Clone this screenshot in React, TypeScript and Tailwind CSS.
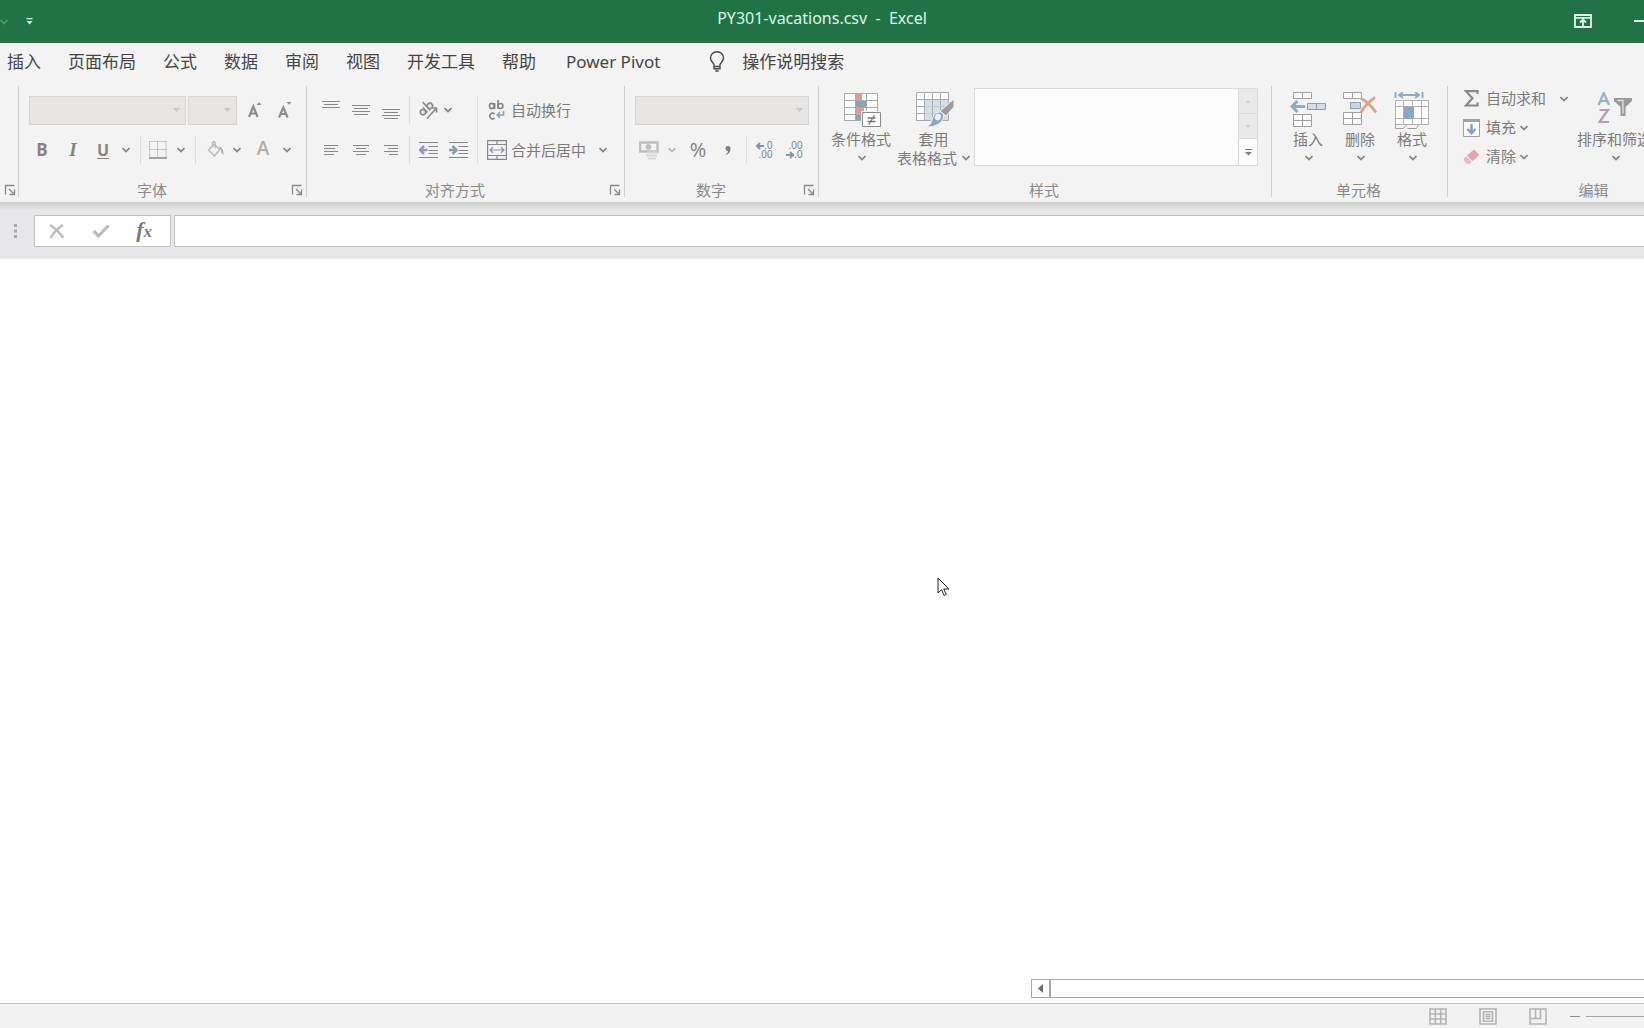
import type { ReactNode } from "react";

const G = "#8f8d8b";

function Chevron({ className = "text-[#858381]" }: { className?: string }) {
  return (
    <svg className={`shrink-0 ${className}`} width="8" height="6" viewBox="0 0 8 6" fill="none" stroke="currentColor" strokeWidth="1.700" aria-hidden="true">
      <path d="M0.500 1L4 4.500 7.500 1" />
    </svg>
  );
}

function Tool({ label, width, children }: { label: string; width: string; children: ReactNode }) {
  return (
    <button type="button" aria-label={label} className={`flex h-7 shrink-0 items-center justify-center ${width}`}>
      {children}
    </button>
  );
}

function Sep({ className = "" }: { className?: string }) {
  return <span className={`w-px shrink-0 self-stretch bg-[#dcdcdc] ${className}`} />;
}

function Launcher({ label }: { label: string }) {
  return (
    <button type="button" aria-label={label} className="mr-[3px] ml-1 flex size-3 shrink-0 items-center justify-center">
      <svg width="12" height="12" viewBox="0 0 12 12" fill="none" stroke="#8a8886" strokeWidth="1.3" aria-hidden="true">
        <path d="M1.5 10.5v-9h9M5 5l5 5M10.5 5.5v5h-5" />
      </svg>
    </button>
  );
}

function Group({ name, launcher = false, className, children }: { name: string; launcher?: boolean; className: string; children: ReactNode }) {
  return (
    <section aria-label={name} className={`flex shrink-0 flex-col border-r border-[#cfcfcf] ${className}`}>
      <div className="flex-1">{children}</div>
      <div className="flex h-[14px] items-center">
        <span className="flex-1 pr-0.5 text-center text-[15px] leading-4 text-[#8c8a88]">{name}</span>
        {launcher && <Launcher label={`${name}设置`} />}
      </div>
    </section>
  );
}

function Combo({ label, width }: { label: string; width: string }) {
  return (
    <div className={`relative h-[29px] shrink-0 ${width}`}>
      <select aria-label={label} disabled className="size-full appearance-none border border-[#d6d5d3] bg-[#e7e6e4] opacity-100" />
      <svg className="absolute top-3 right-1.5" width="7" height="4" viewBox="0 0 7 4" aria-hidden="true">
        <path d="M0 0h7L3.500 4z" fill="#cbc9c7" />
      </svg>
    </div>
  );
}

function Lines({ rows }: { rows: [number, number, number][] }) {
  return (
    <svg width="18" height="20" viewBox="0 0 18 20" stroke="#8b8785" strokeWidth="1" aria-hidden="true">
      {rows.map(([x1, x2, y]) => (
        <path key={y} d={`M${x1} ${y + 0.5}H${x2}`} />
      ))}
    </svg>
  );
}

function BigButton({ icon, lines, width }: { icon: ReactNode; lines: string[]; width: string }) {
  return (
    <button type="button" className={`flex shrink-0 flex-col items-center text-[15px] leading-5 whitespace-nowrap text-[#7d7b79] ${width}`}>
      <span className="flex h-[37px] items-start justify-center">{icon}</span>
      <span>{lines[0]}</span>
      <span className="flex h-[18px] items-center gap-[5px]">
        {lines[1]}
        <Chevron className={lines[1] ? "text-[#858381]" : "ml-0.5 text-[#858381]"} />
      </span>
    </button>
  );
}

function EditItem({ icon, text, gap }: { icon: ReactNode; text: string; gap: string }) {
  return (
    <button type="button" className="flex h-[29px] items-center text-[15px] whitespace-nowrap text-[#7d7b79]">
      <span className="mr-1.5 flex w-[18px] justify-center">{icon}</span>
      {text}
      <span className={gap}>
        <Chevron />
      </span>
    </button>
  );
}

const LATIN = "font-['Open_Sans','Noto_Sans',sans-serif]";

const tabs = ["插入", "页面布局", "公式", "数据", "审阅", "视图", "开发工具", "帮助"];

function TitleBar() {
  return (
    <header className="grid h-[43px] grid-cols-[1fr_auto_1fr] border-b border-[#3a6b50] bg-[#217346] text-[#dcf7e6]">
      <div className="flex items-center pt-px">
        <button type="button" aria-label="撤消">
          <Chevron className="text-[#4f9a70]" />
        </button>
        <button type="button" aria-label="自定义快速访问工具栏" className="ml-[18px]">
          <svg width="7" height="7" viewBox="0 0 7 7" fill="currentColor" aria-hidden="true">
            <path d="M0.500 0h6v1.200h-6zM0.500 3h6l-3 3.500z" />
          </svg>
        </button>
      </div>
      <h1 className="pt-2 text-[16px] leading-5 whitespace-pre">PY301-vacations.csv  -  Excel</h1>
      <div className="flex items-center justify-end overflow-hidden">
        <button type="button" aria-label="功能区显示选项" className="mr-[42px]">
          <svg width="18" height="14" viewBox="0 0 18 14" fill="none" stroke="currentColor" strokeWidth="1.800" aria-hidden="true">
            <path d="M1 1h16v12H1zM1 3.800h16M9 12V6M6 8.500l3-3 3 3" />
          </svg>
        </button>
        <button type="button" aria-label="最小化" className="h-4 w-2.5">
          <span className="block h-0.5 bg-current" />
        </button>
      </div>
    </header>
  );
}

function TabBar() {
  return (
    <nav className="flex h-[43px] items-center gap-[27px] pr-4 pb-1.5 pl-[7px] text-[17px] whitespace-nowrap text-[#474543]">
      {tabs.map((t) => (
        <button type="button" key={t}>
          {t}
        </button>
      ))}
      <button type="button" className="ml-[3px]">
        Power Pivot
      </button>
      <button type="button" className="ml-[22px] flex items-center gap-[17px]">
        <svg width="16" height="21" viewBox="0 0 16 21" fill="none" stroke="#4a4846" strokeWidth="1.400" aria-hidden="true">
          <path d="M5 15.500v-2C4.800 12 1.500 10.500 1.500 7a6.500 6.200 0 0 1 13 0c0 3.500-3.300 5-3.500 6.500v2zM5 15.500v2.200h6v-2.200M6.300 20h3.400" />
        </svg>
        操作说明搜索
      </button>
    </nav>
  );
}

function FontGroup() {
  return (
    <Group name="字体" launcher className="w-[288px]">
      <div className="flex gap-0.5 pt-[10px] pl-[10px]">
        <Combo label="字体名称" width="w-[157px]" />
        <Combo label="字号" width="w-[49px]" />
        <Tool label="增大字号" width="w-8">
          <svg width="14" height="17" viewBox="0 0 14 17" aria-hidden="true">
            <path d="M8.500 3L11 0.300 13.500 3z" fill={G} />
            <path d="M1 15L5.300 4.500 9.600 15M2.800 11.500h5" fill="none" stroke={G} strokeWidth="2.200" />
          </svg>
        </Tool>
        <Tool label="减小字号" width="w-6">
          <svg width="14" height="17" viewBox="0 0 14 17" aria-hidden="true">
            <path d="M8.500 0L11 2.700 13.500 0z" fill={G} />
            <path d="M1 15.500L5.300 5.500 9.600 15.500M2.800 12h5" fill="none" stroke={G} strokeWidth="2.200" />
          </svg>
        </Tool>
      </div>
      <div className="flex pt-[11px] pl-2 text-[#858381]">
        <Tool label="加粗" width="w-[30px]">
          <span className={`text-[17px] font-bold ${LATIN}`}>B</span>
        </Tool>
        <Tool label="倾斜" width="w-8">
          <span className="font-['Liberation_Serif',serif] text-[19px] font-bold italic">I</span>
        </Tool>
        <Tool label="下划线" width="w-7">
          <span className={`border-b border-current text-[16px] leading-4 font-bold ${LATIN}`}>U</span>
        </Tool>
        <Tool label="下划线选项" width="w-[18px]">
          <Chevron />
        </Tool>
        <Sep className="mr-[5px] ml-[5px]" />
        <Tool label="边框" width="w-6">
          <svg width="18" height="18" viewBox="0 0 18 18" fill="none" stroke="#9d9b99" aria-hidden="true">
            <path d="M0.500 0.500h17M0.500 8.500h17M0.500 0.500v16M8.500 0.500v16M17 0.500v16" strokeDasharray="1 1" />
            <path d="M0 17h18" strokeWidth="1.500" stroke="#8b8987" />
          </svg>
        </Tool>
        <Tool label="边框选项" width="w-[21px]">
          <Chevron />
        </Tool>
        <Sep className="mx-1" />
        <Tool label="填充颜色" width="w-[31px]">
          <svg width="18" height="18" viewBox="0 0 18 18" fill="none" stroke="#bdbab7" strokeWidth="1.500" aria-hidden="true">
            <path d="M7 3.500l6 4.800L7.500 15 1.500 9zM5.500 6V2a1.300 1.300 0 0 1 2.600 0V7" />
            <path d="M12 5.500c3 0.500 4.800 3 4.500 8.500-1.500-1-2.800-3-2.500-5z" fill="#b3b0ad" stroke="none" />
          </svg>
        </Tool>
        <Tool label="填充颜色选项" width="w-3">
          <Chevron />
        </Tool>
        <Tool label="字体颜色" width="w-10">
          <span className={`-mt-1 text-[19px] font-semibold text-[#b0adab] ${LATIN}`}>A</span>
        </Tool>
        <Tool label="字体颜色选项" width="w-2">
          <Chevron />
        </Tool>
      </div>
    </Group>
  );
}

function Indent({ flip = false }: { flip?: boolean }) {
  return (
    <svg width="19" height="18" viewBox="0 0 19 18" fill="none" aria-hidden="true">
      <path d="M0 1.500h19M9.500 5.500H19M9.500 9.500H19M9.500 12.500H19M0 16.500h19" stroke="#8b8785" />
      <path d={flip ? "M0 9h7M3.500 5L7.500 9l-4 4" : "M8.500 9H1.500M5 5L1 9l4 4"} stroke="#8a9db8" strokeWidth="2.500" />
    </svg>
  );
}

function AlignGroup() {
  return (
    <Group name="对齐方式" launcher className="w-[318px]">
      <div className="flex pt-[10px] pl-[9px]">
        <div className="flex flex-col gap-3">
          <div className="flex">
            <Tool label="顶端对齐" width="w-[30px]"><Lines rows={[[0, 18, 1], [2, 16, 4], [0, 18, 7]]} /></Tool>
            <Tool label="垂直居中" width="w-[30px]"><Lines rows={[[0, 18, 5], [2, 16, 8], [0, 18, 11], [2, 16, 14]]} /></Tool>
            <Tool label="底端对齐" width="w-[30px]"><Lines rows={[[0, 18, 9], [2, 16, 12], [0, 18, 15], [2, 16, 18]]} /></Tool>
          </div>
          <div className="flex">
            <Tool label="左对齐" width="w-[30px]"><Lines rows={[[2, 16, 5], [2, 13, 8], [2, 16, 11], [2, 12, 14]]} /></Tool>
            <Tool label="居中" width="w-[30px]"><Lines rows={[[1, 17, 5], [4, 14, 8], [1, 17, 11], [4, 14, 14]]} /></Tool>
            <Tool label="右对齐" width="w-[30px]"><Lines rows={[[2, 16, 5], [6, 16, 8], [2, 16, 11], [7, 16, 14]]} /></Tool>
          </div>
        </div>
        <div className="mx-[3px] flex flex-col gap-3">
          <Sep className="w-px flex-1 self-center" />
          <Sep className="w-px flex-1 self-center" />
        </div>
        <div className="flex w-16 flex-col gap-3">
          <div className="flex">
            <Tool label="方向" width="w-[30px]">
              <svg width="20" height="20" viewBox="0 0 20 20" fill="none" stroke={G} strokeWidth="1.700" aria-hidden="true">
                <g transform="rotate(-42 8 8)">
                  <circle cx="3" cy="9" r="2.700" />
                  <path d="M6 5.500v7M9.500 1.500v11" />
                  <circle cx="12.300" cy="9" r="2.700" />
                </g>
                <path d="M9 18.500l9-10M14 8h4.500v4.500" />
              </svg>
            </Tool>
            <Tool label="方向选项" width="w-[9px]">
              <Chevron />
            </Tool>
          </div>
          <div className="flex">
            <Tool label="减少缩进量" width="w-[30px]"><Indent /></Tool>
            <Tool label="增加缩进量" width="w-[30px]"><Indent flip /></Tool>
          </div>
        </div>
        <Sep />
        <div className="flex flex-col gap-3 pl-[9px] text-[15px] whitespace-nowrap text-[#7d7b79]">
          <button type="button" className="flex h-7 items-center gap-1">
            <svg width="20" height="20" viewBox="0 0 20 20" fill="none" stroke="#858381" strokeWidth="1.600" aria-hidden="true">
              <ellipse cx="4.800" cy="6" rx="2.300" ry="2.600" />
              <path d="M7.600 3v6M11 0v9M7.600 14a2.800 2.800 0 1 0 0 4" />
              <circle cx="13.400" cy="6" r="2.500" />
              <path d="M16.500 11v4H10.500M13 12.200L10.200 15l2.800 2.800" stroke="#8a9db8" />
            </svg>
            自动换行
          </button>
          <button type="button" className="flex h-7 items-center gap-1">
            <svg width="20" height="20" viewBox="0 0 20 20" fill="none" stroke="#8b8987" strokeWidth="1.200" aria-hidden="true">
              <path d="M0.600 0.600h18.800v18.800H0.600zM0.600 4.500h18.800M0.600 15.500h18.800M10 0.600v4M10 15.500v4" />
              <path d="M3 10h14M6 7.200L3 10l3 2.800M14 7.200l3 2.800-3 2.800" stroke="#8598b0" />
            </svg>
            合并后居中
            <span className="ml-[9px]"><Chevron /></span>
          </button>
        </div>
      </div>
    </Group>
  );
}

function Decimals({ less = false }: { less?: boolean }) {
  const arrow = (
    <svg width="8" height="8" viewBox="0 0 8 8" fill="none" stroke="#7f95ab" strokeWidth="2" aria-hidden="true">
      <path d={less ? "M0 4h7M4 1l3 3-3 3" : "M8 4H1M4 1L1 4l3 3"} />
    </svg>
  );
  return (
    <span className="flex w-[17px] flex-col items-end font-['Liberation_Sans',sans-serif] text-[10px] leading-[9px] text-[#82807e]">
      <span className="flex items-center">{!less && arrow}{less ? ".00" : ".0"}</span>
      <span className="flex items-center">{less && arrow}{less ? ".0" : ".00"}</span>
    </span>
  );
}

function NumberGroup() {
  return (
    <Group name="数字" launcher className="w-[194px]">
      <div className="pt-[10px] pl-[10px]">
        <Combo label="数字格式" width="w-[174px]" />
      </div>
      <div className="flex pt-[11px] pl-[9px] text-[#82807e]">
        <Tool label="会计数字格式" width="w-[30px]">
          <svg width="20" height="19" viewBox="0 0 20 19" fill="none" stroke="#c0bebc" aria-hidden="true">
            <path d="M1 1.500h17.500v9H1z" strokeWidth="2.400" />
            <circle cx="9.500" cy="6" r="2.500" fill="#c0bebc" />
            <path d="M8 11.500h12M7 14.500h11M9 17.500h8" strokeWidth="2" stroke="#d9d7d5" />
          </svg>
        </Tool>
        <Tool label="会计格式选项" width="w-4">
          <Chevron className="text-[#bdbbb9]" />
        </Tool>
        <Tool label="百分比样式" width="w-9">
          <span className={`text-[20px] ${LATIN}`}>%</span>
        </Tool>
        <Tool label="千位分隔样式" width="w-[23px]">
          <svg width="6" height="9" viewBox="0 0 6 9" fill="#857d7b" aria-hidden="true">
            <path d="M3 0a2.500 2.500 0 0 1 2.500 2.700C5.500 6 3.800 8 1 8.800L0.700 8C2.300 7.300 3 6.300 3 5A2.500 2.500 0 0 1 3 0z" />
          </svg>
        </Tool>
        <Sep className="mr-0.5 ml-[7px]" />
        <Tool label="增加小数位数" width="w-[30px]"><Decimals /></Tool>
        <Tool label="减少小数位数" width="w-[30px]"><Decimals less /></Tool>
      </div>
    </Group>
  );
}

function StylesGroup() {
  return (
    <Group name="样式" className="w-[453px]">
      <div className="flex pt-0.5">
        <div className="flex pt-1 pl-1.5">
          <BigButton
            width="w-[72px]"
            lines={["条件格式", ""]}
            icon={
              <svg className="ml-1" width="38" height="36" viewBox="0 -1 38 36" fill="none" aria-hidden="true">
                <path d="M1 1h33v27H1z" fill="#fdfdfd" />
                <path d="M12 1h6v6h-6zM12 15h8v6h-8z" fill="#d9a093" />
                <path d="M12 8h10v6H12zM12 22h6v6h-6z" fill="#8aa3bd" />
                <path d="M0.500 0.500h33v27h-33zM11.500 1v27M22.500 1v27M1 7.500h33M1 14.500h33M1 21.500h33" stroke="#a9aaab" />
                <path d="M17 18h21v16H17z" fill="#f3f3f3" />
                <path d="M18.500 19.500h18v14h-18z" fill="#fff" stroke="#8b8987" />
                <path d="M23.500 25h8M23.500 28.500h8M30.500 22l-5.500 9.500" stroke="#777573" strokeWidth="1.300" />
              </svg>
            }
          />
          <BigButton
            width="w-[73px]"
            lines={["套用", "表格格式"]}
            icon={
              <svg className="ml-0.5" width="38" height="36" viewBox="0 0 38 36" fill="none" aria-hidden="true">
                <path d="M1 1h32v27H1z" fill="#fdfdfd" />
                <path d="M9 8h24v20H9z" fill="#d3dfea" />
                <path d="M0.500 0.500h32v28h-32zM8.500 1v27M16.500 1v27M24.500 1v27M1 7.500h32" stroke="#a9aaab" />
                <path d="M1 14.500h8M1 21.500h8" stroke="#a9aaab" />
                <path d="M9 14.500h24M9 21.500h24" stroke="#bccad6" />
                <path d="M38 7v8L30 24l-6-5z" fill="#a09c9a" stroke="#f3f3f3" />
                <path d="M23 20c3 0 5 2 4.500 5-1 6-8 10.500-17.500 10 4-1.500 5-3.500 6-7 1-4 4-8 7-8z" fill="#8aa7c6" stroke="#f3f3f3" />
                <ellipse cx="22" cy="25" rx="2.800" ry="3.500" transform="rotate(30 22 25)" fill="#f3f6fa" />
              </svg>
            }
          />
        </div>
        <div className="ml-1 flex h-[78px] w-[284px] border border-[#dadada] bg-[#fcfcfc]">
          <div className="flex-1" />
          <div className="flex w-[19px] flex-col border-l border-[#dadada]">
            <button type="button" aria-label="上一行" disabled className="flex flex-1 items-center justify-center border-b border-[#dadada] bg-[#ebe9e8]">
              <svg width="6" height="3" viewBox="0 0 6 3" fill="#d3d1cf" aria-hidden="true"><path d="M0 3L3 0l3 3z" /></svg>
            </button>
            <button type="button" aria-label="下一行" disabled className="flex flex-1 items-center justify-center border-b border-[#dadada] bg-[#ebe9e8]">
              <svg width="6" height="3" viewBox="0 0 6 3" fill="#d3d1cf" aria-hidden="true"><path d="M0 0l3 3 3-3z" /></svg>
            </button>
            <button type="button" aria-label="其他样式" className="flex h-[26px] items-center justify-center">
              <svg width="7" height="7" viewBox="0 0 7 7" fill="#82807e" aria-hidden="true"><path d="M0 0h7v1H0zM0 3h7L3.500 6.500z" /></svg>
            </button>
          </div>
        </div>
      </div>
    </Group>
  );
}

function CellsGroup() {
  return (
    <Group name="单元格" className="w-[176px]">
      <div className="flex pt-1.5 pl-[10px]">
        <BigButton
          width="w-[52px]"
          lines={["插入", ""]}
          icon={
            <svg width="36" height="36" viewBox="0 0.500 36 36" fill="none" aria-hidden="true">
              <path d="M3.500 1h18v6h-18zM12.500 1v6M3.500 23h18v12h-18zM12.500 23v12M3.500 29h18" fill="#fbfbfb" stroke="#a19f9e" />
              <path d="M17.500 12h18v6h-18zM26.500 12v6" fill="#d5dce8" stroke="#9599a2" />
              <path d="M15 15H2M7.500 9.500L2 15l5.500 5.500" stroke="#8fa9c6" strokeWidth="3" />
            </svg>
          }
        />
        <BigButton
          width="w-[52px]"
          lines={["删除", ""]}
          icon={
            <svg width="36" height="36" viewBox="0 0.500 36 36" fill="none" aria-hidden="true">
              <path d="M1.500 1h18v6h-18zM10.500 1v6M1.500 21h18v12h-18zM10.500 21v12M1.500 27h18" fill="#fbfbfb" stroke="#a19f9e" />
              <path d="M8.500 11h10v6h-10z" fill="#c9d5e6" stroke="#959eab" />
              <path d="M19 7c6 3 11 8 15 14M33 6c-6 4-11 9-14 15" stroke="#dda48c" strokeWidth="2.800" />
            </svg>
          }
        />
        <BigButton
          width="w-[52px]"
          lines={["格式", ""]}
          icon={
            <svg width="36" height="38" viewBox="0 0 36 38" fill="none" aria-hidden="true">
              <path d="M1.500 0v6M28.500 0v6M5 3h20M9 0L5 3l4 3M21 0l4 3-4 3" stroke="#8fa9c6" strokeWidth="1.800" />
              <path d="M1.500 8.500h33v24h-33z" fill="#fdfdfd" />
              <path d="M1.500 8.500h33v24h-33zM1.500 14.500h33M1.500 26.500h33M9.500 8.500v24M18.500 8.500v24M27.500 8.500v24" stroke="#aeb0b2" />
              <path d="M10 15h10v12H10z" fill="#8aa7c6" />
              <path d="M1.500 32.500v4h8l3-3.500M13.500 36.500h9l2-3.500" stroke="#a19f9e" />
            </svg>
          }
        />
      </div>
    </Group>
  );
}

function EditGroup() {
  return (
    <Group name="编辑" className="w-[294px]">
      <div className="flex">
        <div className="-mt-0.5 flex w-[129px] flex-col pl-[14px]">
          <EditItem
            text="自动求和"
            gap="ml-[14px]"
            icon={
              <svg width="15" height="17" viewBox="0 0 15 17" fill="none" stroke="#8b8987" strokeWidth="2.200" aria-hidden="true">
                <path d="M13.500 4V1.200H2L8.500 8.300 2 15.500h11.500V12.500" />
              </svg>
            }
          />
          <EditItem
            text="填充"
            gap="ml-1"
            icon={
              <svg width="17" height="18" viewBox="0 0 17 18" fill="none" aria-hidden="true">
                <path d="M0.500 0.500h16v17H0.500z" fill="#fbfbfb" stroke="#a3a09e" />
                <path d="M0 0h17v3H0z" fill="#a3a09e" />
                <path d="M8.500 5v9M4.500 10l4 4.300 4-4.300" stroke="#869dbd" strokeWidth="2.400" />
              </svg>
            }
          />
          <EditItem
            text="清除"
            gap="ml-1"
            icon={
              <svg width="17" height="16" viewBox="0 0 17 16" aria-hidden="true">
                <path d="M11 0.500l5.500 5.500-7 6L4 6.500z" fill="#e3a5b1" />
                <path d="M3.200 7.200l5.500 5.500-2.500 2.300H4L0.800 11.500V9.500z" fill="#eab9c2" />
              </svg>
            }
          />
        </div>
        <div className="pt-1.5">
          <BigButton
            width="w-[75px]"
            lines={["排序和筛选", ""]}
            icon={
              <svg width="36" height="34" viewBox="0 0 36 34" fill="none" aria-hidden="true">
                <path d="M1.500 13L6.800 1 12 13M3.300 9h7" stroke="#93b1c9" strokeWidth="2.200" />
                <path d="M2.500 18h8.500L2.500 30H12" stroke="#b39dc4" strokeWidth="2.200" />
                <path d="M17 6h18v3l-6.500 6v9h-5v-9L17 9z" fill="#9b9997" />
                <path d="M20.500 8.500h5.500v13" stroke="#e3e2e1" strokeWidth="1.300" />
              </svg>
            }
          />
        </div>
      </div>
    </Group>
  );
}

function FormulaBar() {
  return (
    <div className="flex h-[57px] shrink-0 items-center bg-linear-to-b from-[#cecdcd] from-0% to-[#e7e6e8] to-[14%] pt-px">
      <svg className="ml-3.5 shrink-0" width="4" height="16" viewBox="0 0 4 16" fill="#aaa8a8" aria-hidden="true">
        <path d="M0 1h3v3H0zM0 6.500h3v3H0zM0 12h3v3H0z" />
      </svg>
      <div className="ml-4 flex h-8 w-[137px] shrink-0 items-center border border-[#c3c1c3] bg-white pr-1">
        <button type="button" aria-label="取消" className="flex flex-1 justify-center">
          <svg width="16" height="15" viewBox="0 0 16 15" fill="none" stroke="#bcbaba" strokeWidth="2.400" aria-hidden="true">
            <path d="M1 1c5 3 9 7 13.500 13M14 1C9 4 5 8 1.500 14" />
          </svg>
        </button>
        <button type="button" aria-label="输入" className="flex flex-1 justify-center">
          <svg width="18" height="14" viewBox="0 0 18 14" fill="none" stroke="#bcbaba" strokeWidth="3.200" aria-hidden="true">
            <path d="M1.500 7l5 5L16.500 1.500" />
          </svg>
        </button>
        <button type="button" aria-label="插入函数" className="flex-1 font-['Liberation_Serif',serif] text-[22px] leading-6 font-bold text-[#7c7a79] italic">
          f<span className="text-[17px]">x</span>
        </button>
      </div>
      <input type="text" aria-label="编辑栏" className="ml-[3px] h-8 min-w-0 flex-1 border border-r-0 border-[#c3c1c3] bg-white px-2 outline-none" />
    </div>
  );
}

function StatusBar() {
  return (
    <footer className="flex h-[25px] shrink-0 items-center justify-end border-t border-[#c6c4c4] bg-[#f3f2f2]">
      <div className="flex gap-8 text-[#b5b3b2]">
        <button type="button" aria-label="普通">
          <svg width="18" height="17" viewBox="0 0 18 17" fill="none" stroke="currentColor" strokeWidth="1.600" aria-hidden="true">
            <path d="M1 1h16v15H1zM6.300 1v15M11.700 1v15M1 6h16M1 11h16" />
          </svg>
        </button>
        <button type="button" aria-label="页面布局">
          <svg width="18" height="17" viewBox="0 0 18 17" fill="none" stroke="currentColor" strokeWidth="1.600" aria-hidden="true">
            <path d="M1 1h16v15H1zM4.500 3.800h9v9.400h-9zM6.500 6.500h5M6.500 8.500h5M6.500 10.500h5" />
          </svg>
        </button>
        <button type="button" aria-label="分页预览">
          <svg width="18" height="17" viewBox="0 0 18 17" fill="none" stroke="currentColor" strokeWidth="1.600" aria-hidden="true">
            <path d="M1 1h16v15H1zM6.500 1v9.500M1 10.500h10.500V1" />
          </svg>
        </button>
      </div>
      <button type="button" aria-label="缩小" className="ml-[23px] flex h-4 w-2.5 items-center">
        <span className="h-px w-full bg-[#8f8d8c]" />
      </button>
      <span className="ml-1.5 h-px w-[58px] bg-[#a9a7a7]" />
    </footer>
  );
}

export default function App() {
  return (
    <div className="flex min-h-screen flex-col overflow-hidden bg-white font-['Noto_Sans','Noto_Sans_CJK_SC',sans-serif]">
      <TitleBar />
      <div className="bg-[#f3f3f3]">
        <TabBar />
        <div className="flex h-[116px] overflow-hidden pb-[5px]">
          <section aria-label="剪贴板" className="flex w-[19px] shrink-0 items-end border-r border-[#cfcfcf]">
            <div className="flex h-[14px] items-center">
              <Launcher label="剪贴板设置" />
            </div>
          </section>
          <FontGroup />
          <AlignGroup />
          <NumberGroup />
          <StylesGroup />
          <CellsGroup />
          <EditGroup />
        </div>
      </div>
      <FormulaBar />
      <main className="relative flex flex-1 flex-col justify-end pb-[5px]">
        <div className="ml-auto flex h-[19px] w-[37.3%] border border-r-0 border-[#aaa8a8] bg-white">
          <button type="button" aria-label="向左滚动" className="flex w-[19px] items-center justify-center border-r-2 border-[#aaa8a8]">
            <svg width="5" height="9" viewBox="0 0 5 9" fill="#6a6868" aria-hidden="true">
              <path d="M5 0v9L0 4.500z" />
            </svg>
          </button>
        </div>
        <svg className="absolute top-[318px] left-[57%]" width="13" height="20" viewBox="0 0 13 20" fill="#fff" stroke="#222" aria-hidden="true">
          <path d="M1 1v15l3.500-3.300 2.600 5.800 2.200-1-2.500-5.500H12z" />
        </svg>
      </main>
      <StatusBar />
    </div>
  );
}
